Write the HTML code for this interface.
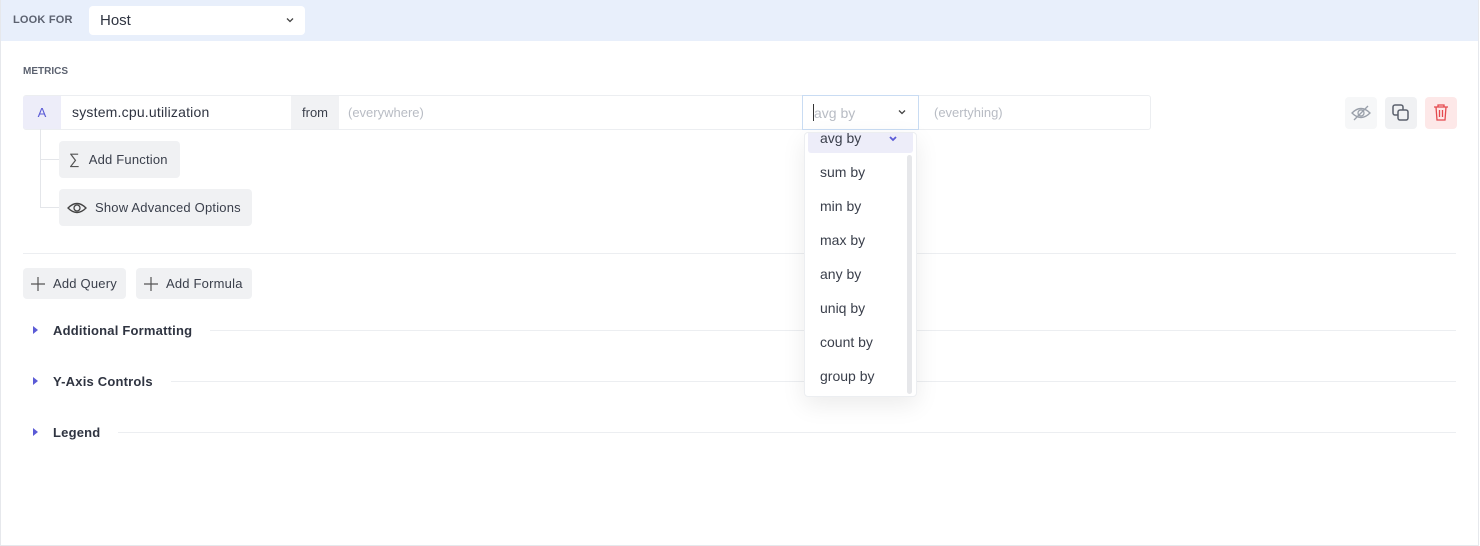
<!DOCTYPE html>
<html><head><style>
*{box-sizing:border-box;margin:0;padding:0}
body{width:1480px;height:546px;background:#fff;font-family:"Liberation Sans",sans-serif;position:relative;overflow:hidden;color:#2f3441}
.a{position:absolute}
.frame{left:0;top:0;width:1479px;height:546px;border:1px solid #e6e8ec;border-top:none}
.hdr{left:1px;top:0;width:1477px;height:41px;background:#e8effb}
.btn{position:absolute;background:#f0f1f3;border-radius:4px;font-size:13px;color:#3a3f4b;display:flex;align-items:center}
.item{position:absolute;left:15px;font-size:14px;color:#3a3f4b}
.sec{position:absolute;left:23px;width:1433px;height:20px;display:flex;align-items:center;font-size:13px;font-weight:bold;color:#2f3441;letter-spacing:.2px}
.sec .tri{width:0;height:0;border-left:5px solid #5b5bd6;border-top:4px solid transparent;border-bottom:4px solid transparent;margin-left:10px;margin-right:15px}
.sec .ln{flex:1;height:1px;background:#eceef1;margin-left:18px}
</style></head><body>
<div class="a frame"></div>
<div class="a hdr"></div>
<div class="a" style="left:13px;top:14px;font-size:11px;font-weight:bold;color:#5c6270;letter-spacing:.2px">LOOK FOR</div>
<div class="a" style="left:89px;top:6px;width:216px;height:29px;background:#fff;border-radius:4px"></div>
<div class="a" style="left:100px;top:12px;font-size:15px;color:#2f3441">Host</div>
<svg class="a" style="left:286px;top:17px" width="8" height="6"><path d="M1 1.5L4 4.5L7 1.5" stroke="#444" stroke-width="1.3" fill="none"/></svg>

<div class="a" style="left:23px;top:66px;font-size:10px;font-weight:bold;color:#5c6270">METRICS</div>

<div class="a" style="left:23px;top:95px;width:1128px;height:35px;border:1px solid #eceef1;border-radius:3px"></div>
<div class="a" style="left:23px;top:96px;width:38px;height:33px;background:#ededf9;border-radius:3px 0 0 3px;color:#5b5bd6;font-size:13px;text-align:center;line-height:33px">A</div>
<div class="a" style="left:72px;top:104px;font-size:14px;color:#2f3441;letter-spacing:.2px">system.cpu.utilization</div>
<div class="a" style="left:291px;top:96px;width:48px;height:33px;background:#f1f2f4;font-size:13px;line-height:33px;text-align:center;color:#3a3f4b">from</div>
<div class="a" style="left:348px;top:105px;font-size:13px;color:#b8bcc4">(everywhere)</div>
<div class="a" style="left:802px;top:95px;width:117px;height:35px;border:1px solid #c9dcf3"></div>
<div class="a" style="left:813px;top:104px;width:1px;height:17px;background:#333"></div>
<div class="a" style="left:814px;top:105px;font-size:14px;color:#b8bcc4">avg by</div>
<svg class="a" style="left:898px;top:109px" width="8" height="6"><path d="M1 1.5L4 4.5L7 1.5" stroke="#444" stroke-width="1.3" fill="none"/></svg>
<div class="a" style="left:934px;top:105px;font-size:13px;color:#b8bcc4">(evertyhing)</div>

<div class="a" style="left:1345px;top:97px;width:32px;height:32px;background:#f6f7f8;border-radius:4px"></div>
<svg class="a" style="left:1350px;top:103px" width="22" height="20" viewBox="0 0 22 20"><path d="M2 10Q11 1 20 10Q11 19 2 10Z" stroke="#9aa0aa" stroke-width="1.3" fill="none"/><circle cx="11" cy="10" r="3" stroke="#9aa0aa" stroke-width="1.3" fill="none"/><path d="M4 17L18 3" stroke="#9aa0aa" stroke-width="1.3"/></svg>
<div class="a" style="left:1385px;top:97px;width:32px;height:32px;background:#f0f1f3;border-radius:4px"></div>
<svg class="a" style="left:1392px;top:104px" width="18" height="18"><rect x="1" y="1" width="10" height="10" rx="2" stroke="#5a606c" stroke-width="1.5" fill="none"/><rect x="6" y="6" width="10" height="10" rx="2" stroke="#5a606c" stroke-width="1.5" fill="#f0f1f3"/></svg>
<div class="a" style="left:1425px;top:97px;width:32px;height:32px;background:#fde8e8;border-radius:4px"></div>
<svg class="a" style="left:1432px;top:103px" width="18" height="19"><path d="M2 4H16M6 4V2H12V4M4 4L5 17H13L14 4M7.5 7V14M10.5 7V14" stroke="#e5484d" stroke-width="1.3" fill="none"/></svg>

<div class="a" style="left:40px;top:129px;width:1px;height:79px;background:#e4e6ea"></div>
<div class="a" style="left:40px;top:159px;width:20px;height:1px;background:#e4e6ea"></div>
<div class="a" style="left:40px;top:207px;width:20px;height:1px;background:#e4e6ea"></div>
<div class="btn" style="left:59px;top:141px;width:121px;height:37px"><span style="margin-left:10px;font-size:15px;color:#555">∑</span><span style="margin-left:9px;letter-spacing:.2px">Add Function</span></div>
<div class="btn" style="left:59px;top:189px;width:193px;height:37px"><svg style="margin-left:8px" width="20" height="14"><path d="M1 7Q10 -2 19 7Q10 16 1 7Z" stroke="#444" stroke-width="1.3" fill="none"/><circle cx="10" cy="7" r="3" stroke="#444" stroke-width="1.3" fill="none"/></svg><span style="margin-left:8px;letter-spacing:.2px">Show Advanced Options</span></div>

<div class="a" style="left:23px;top:253px;width:1433px;height:1px;background:#eceef1"></div>
<div class="btn" style="left:23px;top:268px;width:103px;height:31px"><svg style="margin-left:8px" width="14" height="14"><path d="M7 0V14M0 7H14" stroke="#555" stroke-width="1.2"/></svg><span style="margin-left:8px;letter-spacing:.2px">Add Query</span></div>
<div class="btn" style="left:136px;top:268px;width:116px;height:31px"><svg style="margin-left:8px" width="14" height="14"><path d="M7 0V14M0 7H14" stroke="#555" stroke-width="1.2"/></svg><span style="margin-left:8px;letter-spacing:.2px">Add Formula</span></div>

<div class="sec" style="top:320px"><span class="tri"></span>Additional Formatting<span class="ln"></span></div>
<div class="sec" style="top:371px"><span class="tri"></span>Y-Axis Controls<span class="ln"></span></div>
<div class="sec" style="top:422px"><span class="tri"></span>Legend<span class="ln"></span></div>

<div class="a" style="left:804px;top:132px;width:113px;height:265px;background:#fff;border:1px solid #eceef1;border-radius:4px;box-shadow:0 8px 24px rgba(0,0,0,.08);overflow:hidden">
 <div class="a" style="left:3px;top:-2px;width:105px;height:22px;background:#ededf9;border-radius:3px"></div>
 <div class="item" style="top:-3px;left:15px">avg by</div>
 <svg class="a" style="left:84px;top:3px" width="8" height="6"><path d="M1 1L4 4L7 1" stroke="#5b5bd6" stroke-width="1.8" fill="none"/></svg>
 <div class="a" style="left:102px;top:22px;width:5px;height:239px;background:#e6e7ea;border-radius:3px"></div>
 <div class="item" style="top:31px">sum by</div>
 <div class="item" style="top:65px">min by</div>
 <div class="item" style="top:99px">max by</div>
 <div class="item" style="top:133px">any by</div>
 <div class="item" style="top:167px">uniq by</div>
 <div class="item" style="top:201px">count by</div>
 <div class="item" style="top:235px">group by</div>
</div>
</body></html>
